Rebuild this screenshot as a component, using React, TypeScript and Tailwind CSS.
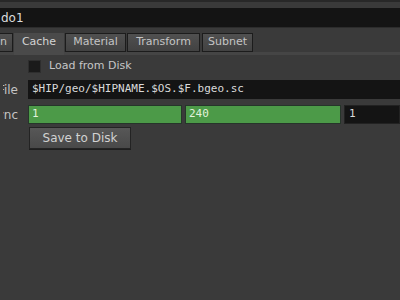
import React from 'react';

const tabs = [
  { label: 'Main', w: 'w-[44px] -ml-[31px] justify-end pr-[5px]' },
  { label: 'Cache', w: 'w-[50px]', active: true },
  { label: 'Material', w: 'w-[61px]' },
  { label: 'Transform', w: 'w-[73px]' },
  { label: 'Subnet', w: 'w-[51px] ml-[1px]' },
];

const Label = ({ text }: { text: string }) => (
  <div className="ml-[3px] w-[15px] shrink-0 overflow-hidden flex justify-end whitespace-nowrap text-[#c4c4c4] text-[12px] mr-[10px]">
    {text}
  </div>
);

export default function App() {
  return (
    <div
      className="w-[400px] h-[300px] overflow-hidden bg-[#3a3a3a] text-[11px] text-[#c8c8c8]"
      style={{ fontFamily: '"DejaVu Sans", "Liberation Sans", sans-serif' }}
    >
      <div className="h-[2px] bg-[#282828]" />
      <div className="mt-[6px] h-[20px] bg-[#141414] border-b border-[#2c2c2c] flex items-center pl-[1px] text-[12px] text-[#dcdcdc]">
        do1
      </div>

      {/* tab strip */}
      <div className="mt-[5px] h-[19px] flex gap-[1px]">
        {tabs.map((t) =>
          t.active ? (
            <div
              key={t.label}
              className={`${t.w} shrink-0 h-[22px] flex items-center justify-center pb-[3px] bg-[#4a4a4a] text-[#d4d4d4]`}
            >
              {t.label}
            </div>
          ) : (
            <div
              key={t.label}
              className={`${t.w} shrink-0 h-full flex items-center justify-center border border-[#1c1c1c] bg-gradient-to-b from-[#505050] to-[#424242] text-[#c4c4c4]`}
            >
              {t.label}
            </div>
          )
        )}
      </div>
      <div className="h-[3px] bg-[#454545]" />

      {/* parameters */}
      <div className="mt-[5px] h-[13px] flex items-center pl-[28px]">
        <div className="w-[13px] h-[13px] bg-[#1a1a1a] border border-[#2e2e2e]" />
        <span className="ml-[8px] text-[#c6c6c6]">Load from Disk</span>
      </div>

      <div className="mt-[7px] flex items-center h-[19px]">
        <Label text="File" />
        <div
          className="flex-1 h-full bg-[#141414] flex items-center pl-[4px] text-[#dadada]"
          style={{ fontFamily: '"DejaVu Sans Mono", "Liberation Mono", monospace' }}
        >
          $HIP/geo/$HIPNAME.$OS.$F.bgeo.sc
        </div>
      </div>

      <div
        className="mt-[6px] flex items-center h-[19px]"
        style={{ fontFamily: '"DejaVu Sans Mono", "Liberation Mono", monospace' }}
      >
        <div style={{ fontFamily: '"DejaVu Sans", sans-serif' }}>
          <Label text="Sync" />
        </div>
        <div className="w-[154px] shrink-0 h-full bg-[#4c9a48] border border-[#26352a] flex items-center pl-[3px] text-[#e2f2dc]">
          1
        </div>
        <div className="ml-[3px] w-[156px] shrink-0 h-full bg-[#4c9a48] border border-[#26352a] flex items-center pl-[3px] text-[#e2f2dc]">
          240
        </div>
        <div className="ml-[3px] flex-1 h-full bg-[#141414] border border-[#222] flex items-center pl-[4px] text-[#dadada]">
          1
        </div>
      </div>

      <div className="mt-[3px] pl-[29px]">
        <button className="w-[102px] h-[22px] border border-[#232323] bg-gradient-to-b from-[#575757] to-[#494949] shadow-[0_1px_0_#1e1e1e] text-[#d2d2d2] text-[12px] flex items-center justify-center">
          Save to Disk
        </button>
      </div>
    </div>
  );
}
